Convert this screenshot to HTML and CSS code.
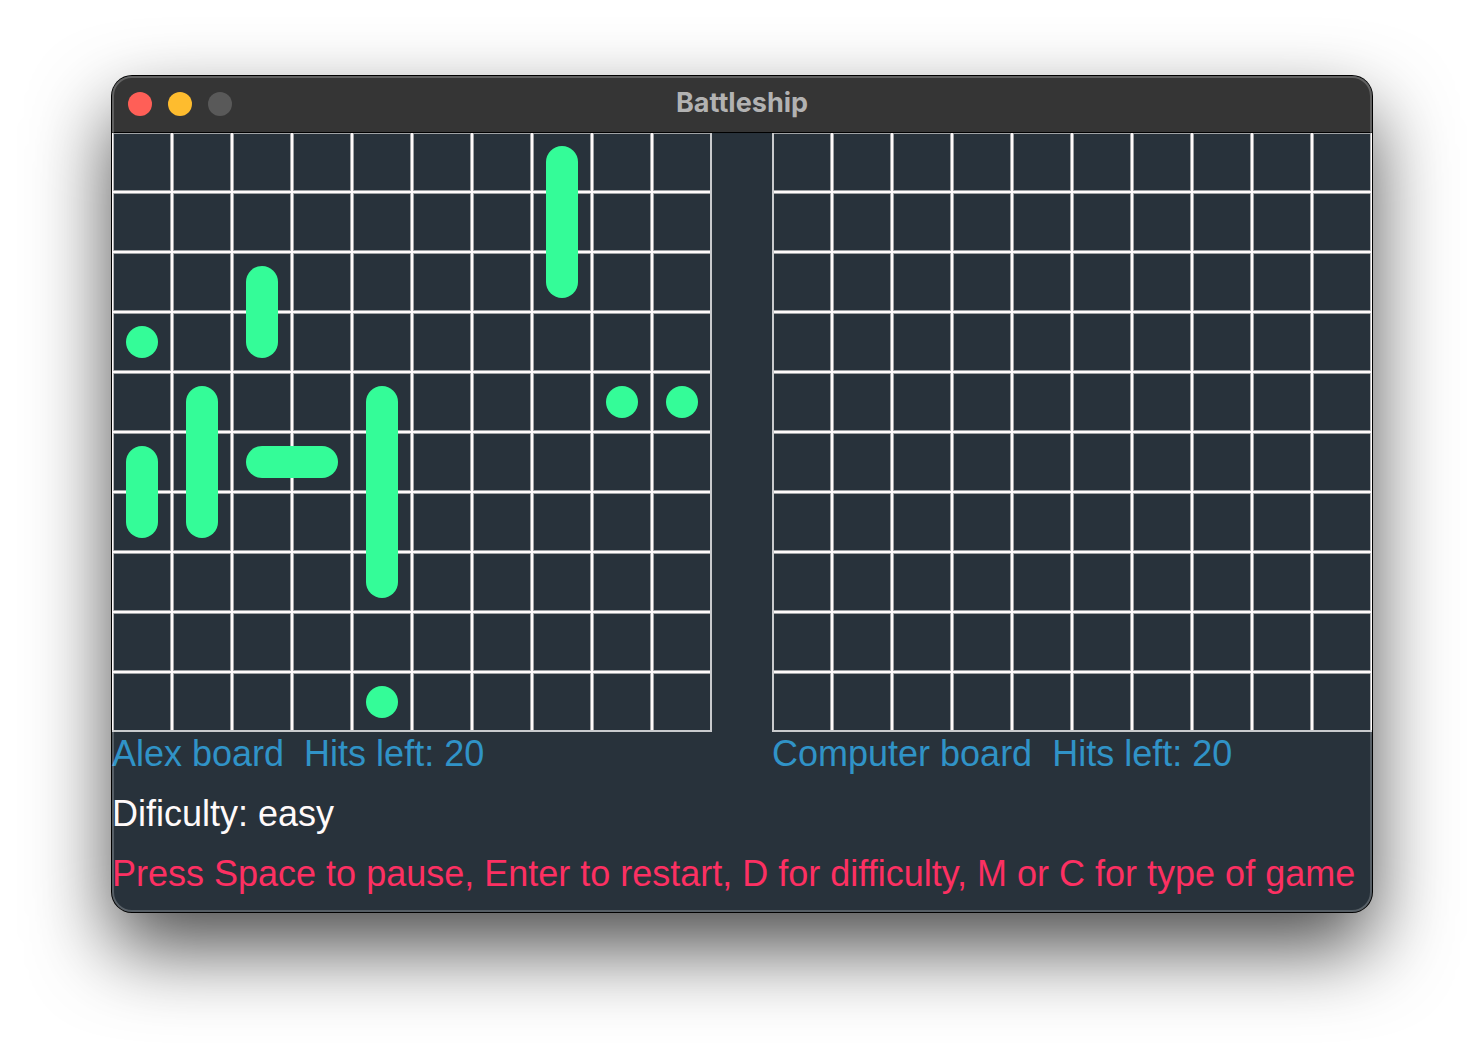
FILE: index.html
```html
<!DOCTYPE html>
<html lang="en">
<head>
<meta charset="utf-8">
<title>Battleship</title>
<link rel="stylesheet" href="styles.css">
</head>
<body>
<main class="window">
  <header class="titlebar">
    <div class="controls">
      <button class="control close" type="button" aria-label="Close"></button>
      <button class="control minimize" type="button" aria-label="Minimize"></button>
      <button class="control zoom" type="button" aria-label="Zoom" disabled></button>
    </div>
    <h1 class="title">Battleship</h1>
  </header>
  <div class="boards">
    <section class="player">
      <svg class="board" viewBox="0 0 600 600" role="img" aria-label="Alex board">
        <defs>
          <pattern id="cells" width="60" height="60" patternUnits="userSpaceOnUse">
            <path class="line-edge" d="M0 0H60V2H0ZM0 58H60V60H0ZM0 2H2V58H0ZM58 2H60V58H58Z"/>
            <path class="line" d="M0 0H60V1H0ZM0 59H60V60H0ZM0 1H1V59H0ZM59 1H60V59H59Z"/>
          </pattern>
        </defs>
        <rect width="600" height="600" fill="url(#cells)"/>
        <path class="rim" d="M0 599H600M599 0V600"/>
        <g class="ships">
          <rect x="434" y="14" width="32" height="152" rx="16"/>
          <rect x="134" y="134" width="32" height="92" rx="16"/>
          <rect x="14" y="194" width="32" height="32" rx="16"/>
          <rect x="74" y="254" width="32" height="152" rx="16"/>
          <rect x="254" y="254" width="32" height="212" rx="16"/>
          <rect x="494" y="254" width="32" height="32" rx="16"/>
          <rect x="554" y="254" width="32" height="32" rx="16"/>
          <rect x="14" y="314" width="32" height="92" rx="16"/>
          <rect x="134" y="314" width="92" height="32" rx="16"/>
          <rect x="254" y="554" width="32" height="32" rx="16"/>
        </g>
      </svg>
      <p class="status score"><span>Alex board</span><span>Hits left: 20</span></p>
    </section>
    <section class="player">
      <svg class="board" viewBox="0 0 600 600" role="img" aria-label="Computer board">
        <rect width="600" height="600" fill="url(#cells)"/>
        <path class="rim" d="M0 599H600M1 0V600"/>
      </svg>
      <p class="status score"><span>Computer board</span><span>Hits left: 20</span></p>
    </section>
  </div>
  <footer class="messages">
    <p class="status difficulty">Dificulty: easy</p>
    <p class="status help">Press Space to pause, Enter to restart, D for difficulty, M or C for type of game</p>
  </footer>
</main>
</body>
</html>
```
FILE: styles.css
```css
* {
  box-sizing: border-box;
}

html {
  background: #fff;
}

body {
  min-height: 100vh;
  margin: 0;
  padding: 76px 112px;
}

.window {
  position: relative;
  border-radius: 20px;
  background: #28323b;
  box-shadow:
    0 0 0 1px #000,
    0 36px 80px rgba(0, 0, 0, 0.7);
  font-family: "Liberation Sans", Arial, sans-serif;
}

/* Light rim along the inside of the window edge */
.window::after {
  content: "";
  position: absolute;
  z-index: 2;
  inset: 0;
  border: 2px solid rgba(255, 255, 255, 0.22);
  border-radius: 20px;
  pointer-events: none;
}

.titlebar {
  position: relative;
  z-index: 1;
  display: grid;
  grid-template-columns: 1fr auto 1fr;
  align-items: center;
  height: 56px;
  padding: 0 16px;
  border-radius: 20px 20px 0 0;
  background: #353535;
  box-shadow: 0 1px #000;
}

.controls {
  display: flex;
  gap: 16px;
}

.control {
  width: 24px;
  height: 24px;
  padding: 0;
  border: 0;
  border-radius: 50%;
}

.close {
  background: #ff5f57;
}

.minimize {
  background: #febc2e;
}

.zoom {
  background: #595959;
}

.title {
  margin: 0;
  padding-bottom: 2px;
  color: #b2b2b2;
  font: 700 27px/52px Inter, sans-serif;
}

.boards {
  display: grid;
  grid-template-columns: 1fr 1fr;
  column-gap: 60px;
}

.board {
  display: block;
  width: 100%;
  height: auto;
}

.line {
  fill: #fffafa;
}

.line-edge {
  fill: #a0a3a6;
}

.rim {
  stroke: #c9cbcd;
  stroke-width: 2;
}

.ships {
  fill: #34fc98;
}

.status {
  margin: 0;
  font-size: 36px;
  line-height: 44px;
  white-space: nowrap;
}

.score {
  display: flex;
  gap: 20px;
  color: #3093c7;
}

.messages {
  display: grid;
  gap: 16px;
  padding: 16px 0;
}

.difficulty {
  color: #fffafa;
}

.help {
  color: #fc3062;
}
```
